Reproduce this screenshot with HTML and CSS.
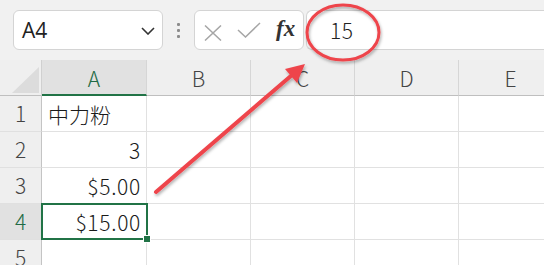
FILE: index.html
```html
<!DOCTYPE html>
<html lang="ja">
<head>
<meta charset="utf-8">
<link rel="stylesheet" href="styles.css">
</head>
<body>
<div class="app">
  <div class="formula-bar">
    <div class="name-box">
      <span class="name-text">A4</span>
      <svg class="chevron" width="14" height="8" viewBox="0 0 14 8"><path d="M1 1 L7 7 L13 1" fill="none" stroke="#333" stroke-width="1.6"/></svg>
    </div>
    <div class="grip"><i></i><i></i><i></i></div>
    <div class="fx-box">
      <svg class="icon-x" width="18" height="16" viewBox="0 0 18 16"><path d="M1 0.5 L17 15.5 M17 0.5 L1 15.5" stroke="#a6a6a6" stroke-width="1.5" fill="none"/></svg>
      <svg class="icon-check" width="24" height="16" viewBox="0 0 24 16"><path d="M1 8 L8.5 15 L23 1" stroke="#a6a6a6" stroke-width="1.5" fill="none"/></svg>
      <span class="fx">fx</span>
    </div>
    <div class="formula-input"><span class="formula-text">15</span></div>
  </div>
  <div class="sheet">
    <div class="corner"><svg width="42" height="36" viewBox="0 0 42 36"><polygon points="12,33 39,33 39,7" fill="#dcdcdc"/></svg></div>
    <div class="col-head active">A</div>
    <div class="col-head">B</div>
    <div class="col-head">C</div>
    <div class="col-head">D</div>
    <div class="col-head">E</div>

    <div class="row-head">1</div>
    <div class="cell left">中力粉</div>
    <div class="cell"></div><div class="cell"></div><div class="cell"></div><div class="cell"></div>

    <div class="row-head">2</div>
    <div class="cell num">3</div>
    <div class="cell"></div><div class="cell"></div><div class="cell"></div><div class="cell"></div>

    <div class="row-head">3</div>
    <div class="cell num">$5.00</div>
    <div class="cell"></div><div class="cell"></div><div class="cell"></div><div class="cell"></div>

    <div class="row-head active">4</div>
    <div class="cell num selected">$15.00</div>
    <div class="cell"></div><div class="cell"></div><div class="cell"></div><div class="cell"></div>

    <div class="row-head">5</div>
    <div class="cell"></div>
    <div class="cell"></div><div class="cell"></div><div class="cell"></div><div class="cell"></div>
  </div>
  <svg class="annotation" width="544" height="265" viewBox="0 0 544 265">
    <defs>
      <filter id="sh" x="-20%" y="-20%" width="140%" height="140%">
        <feDropShadow dx="1" dy="2" stdDeviation="1.5" flood-color="#000" flood-opacity="0.3"/>
      </filter>
    </defs>
    <g filter="url(#sh)">
      <ellipse cx="343" cy="32.5" rx="36" ry="27.5" fill="none" stroke="#ee454c" stroke-width="3"/>
      <line x1="156" y1="192" x2="292" y2="75" stroke="#ee454c" stroke-width="4" stroke-linecap="round"/>
      <polygon points="305,64 297,83 285,69" fill="#ee454c"/>
    </g>
  </svg>
</div>
</body>
</html>
```
FILE: styles.css
```css
html, body {
  margin: 0;
  padding: 0;
}
body {
  width: 544px;
  height: 265px;
  overflow: hidden;
  background: #f3f3f3;
  font-family: "Noto Sans CJK JP", "Noto Sans", sans-serif;
}
.app {
  position: relative;
  width: 544px;
  height: 265px;
  overflow: hidden;
}
.formula-bar {
  display: flex;
  align-items: flex-start;
  height: 60px;
  box-sizing: border-box;
  padding: 10px 0 0 13px;
  background: #f1f1f1;
}
.name-box {
  width: 150px;
  height: 40px;
  box-sizing: border-box;
  background: #fff;
  border: 1px solid #d4d4d4;
  border-radius: 6px;
  display: flex;
  align-items: center;
  justify-content: space-between;
  padding: 0 7px 0 8px;
}
.name-text {
  font-family: "Open Sans", "Noto Sans", sans-serif;
  font-size: 21px;
  color: #222;
  line-height: 1;
}
.chevron {
  margin-top: 1px;
}
.grip {
  width: 31px;
  height: 40px;
  display: flex;
  flex-direction: column;
  align-items: center;
  justify-content: center;
  gap: 3px;
}
.grip i {
  display: block;
  width: 3px;
  height: 3px;
  background: #8c8c8c;
  border-radius: 1px;
}
.fx-box {
  width: 110px;
  height: 40px;
  box-sizing: border-box;
  background: #fff;
  border: 1px solid #d4d4d4;
  border-radius: 6px;
  display: flex;
  align-items: center;
  padding-left: 9px;
}
.icon-x {
  margin-right: 15px;
  margin-top: 5px;
}
.icon-check {
  margin-right: 15px;
  margin-top: -1px;
}
.fx {
  font-family: "Liberation Serif", serif;
  font-style: italic;
  font-weight: bold;
  font-size: 23px;
  color: #333;
  line-height: 1;
  margin-top: -3px;
}
.formula-input {
  flex: 1;
  height: 40px;
  box-sizing: border-box;
  margin-left: 2px;
  background: #fff;
  border: 1px solid #d4d4d4;
  border-right: none;
  border-radius: 6px 0 0 6px;
  display: flex;
  align-items: center;
  padding-left: 23px;
}
.formula-text {
  font-family: "Noto Sans CJK JP", "Noto Sans", sans-serif;
  font-weight: 300;
  font-size: 21px;
  color: #222;
  line-height: 1;
  letter-spacing: 0.5px;
}
.sheet {
  display: grid;
  grid-template-columns: 42px 105px 104px 104px 104px 104px;
  grid-auto-rows: 36px;
}
.corner {
  background: #efefef;
  border-bottom: 1px solid #bfbfbf;
  box-sizing: border-box;
  border-right: 1px solid #d0d0d0;
}
.corner svg {
  display: block;
}
.col-head {
  background: #efefef;
  box-sizing: border-box;
  border-right: 1px solid #d6d6d6;
  border-bottom: 1px solid #bfbfbf;
  display: flex;
  align-items: center;
  justify-content: center;
  font-size: 21px;
  font-weight: 300;
  color: #444;
  line-height: 1;
  padding-top: 2px;
}
.col-head.active {
  background: #e1e1e1;
  border-bottom: 2px solid #217346;
  color: #1f6b45;
}
.row-head {
  background: #efefef;
  box-sizing: border-box;
  border-right: 1px solid #c4c4c4;
  border-bottom: 1px solid #e0e0e0;
  display: flex;
  align-items: center;
  justify-content: center;
  font-size: 21px;
  font-weight: 300;
  color: #444;
  line-height: 1;
}
.row-head.active {
  background: #e1e1e1;
  color: #1f6b45;
}
.cell {
  background: #fff;
  box-sizing: border-box;
  border-right: 1px solid #e1e1e1;
  border-bottom: 1px solid #e1e1e1;
  display: flex;
  align-items: center;
  font-size: 21px;
  font-weight: 300;
  color: #1a1a1a;
  line-height: 1;
  padding: 2px 5px 0 6px;
}
.cell.num {
  justify-content: flex-end;
  letter-spacing: 0.7px;
}
.cell.left {
  justify-content: flex-start;
}
.cell.selected {
  position: relative;
}
.cell.selected::after {
  content: "";
  position: absolute;
  left: -1px;
  top: -1px;
  right: -2px;
  bottom: -1px;
  border: 2px solid #217346;
}
.cell.selected::before {
  content: "";
  position: absolute;
  right: -5px;
  bottom: -4px;
  width: 6px;
  height: 6px;
  background: #217346;
  border: 1px solid #fff;
  z-index: 2;
}
.annotation {
  position: absolute;
  left: 0;
  top: 0;
  pointer-events: none;
}
```
